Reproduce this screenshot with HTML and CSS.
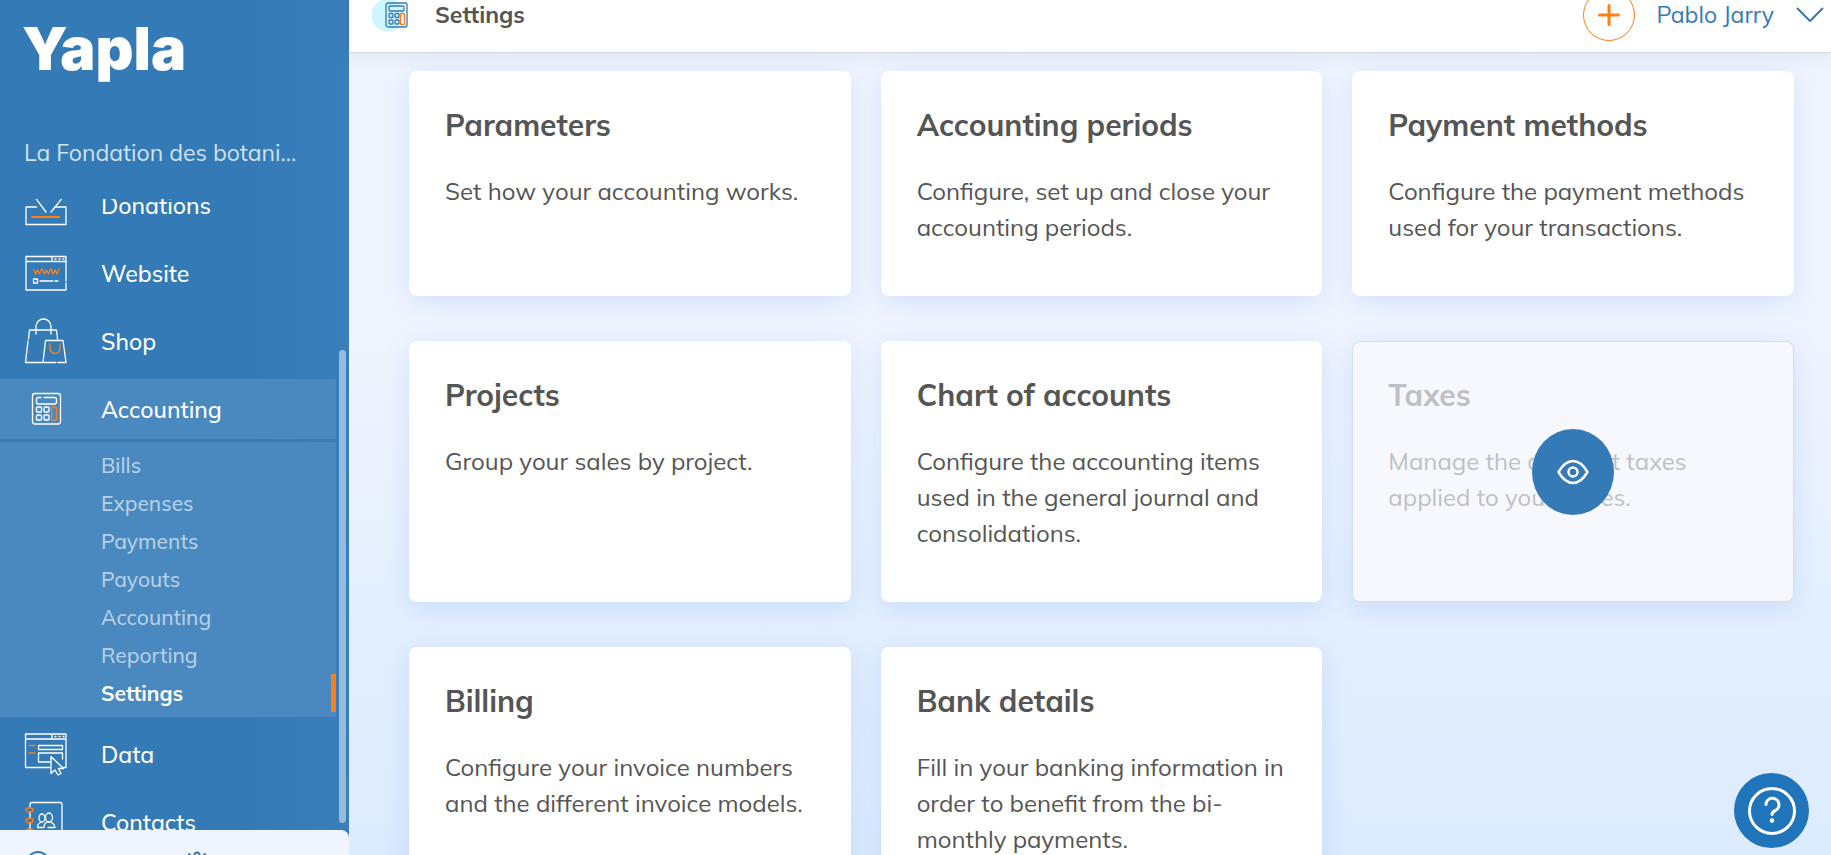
FILE: index.html
```html
<!DOCTYPE html>
<html lang="en">
<head>
<meta charset="utf-8">
<title>Settings - Yapla</title>
<link rel="stylesheet" href="styles.css">
</head>
<body>
<div class="app">
  <aside class="sidebar">
    <a class="logo" href="#">Yapla</a>
    <p class="org">La Fondation des botani...</p>
    <nav class="nav" aria-label="Main">
      <ul class="menu">
        <li><a class="item" href="#">
          <svg class="icon" viewBox="0 0 44 48"><path d="M12.500 26H2v17.500h40V26H31"/><path d="M10 15l12 16M40 15L27 31"/><path class="accent thick" d="M8 36h27"/></svg>
          <span>Donations</span></a></li>
        <li><a class="item" href="#">
          <svg class="icon" viewBox="0 0 44 48"><path d="M42 34v7H2V7.500h40V32M2 12.500h40M28 7.500V12"/><path class="dots" d="M31 10h9"/><path class="accent" d="M9.500 20l2 5 2-4 2 4 2-5M18.500 20l2 5 2-4 2 4 2-5M27 20l2 5 2-4 2 4 2-5"/><path d="M9.500 30h4v4h-4zM16 32h13M31 32h3"/></svg>
          <span>Website</span></a></li>
        <li><a class="item" href="#">
          <svg class="icon" viewBox="0 0 44 48"><path d="M4.500 22l1-9h27l1 9M12 17V9.500a7.500 7.500 0 0 1 15 0V17M4 24L1.500 45.500H32M34 45.500h8L39 23.500H21.500l-2.500 22"/><path class="accent" d="M26 27v4.500a5 5 0 0 0 10 0V27"/></svg>
          <span>Shop</span></a></li>
        <li><a class="item active" href="#">
          <svg class="icon" viewBox="0 0 44 48"><rect x="8.500" y="8.500" width="28" height="30.500" rx="2.500"/><path d="M17 12.500h-2.500q-2 0-2 2v2.500q0 2 2 2h16q2 0 2-2v-2.500q0-2-2-2H20"/><rect x="12.500" y="22" width="5" height="5" rx="1"/><rect x="20" y="22" width="5" height="5" rx="1"/><rect x="12.500" y="30" width="5" height="5" rx="1"/><rect x="20" y="30" width="5" height="5" rx="1"/><rect class="accent" x="27.500" y="22" width="5" height="13" rx="1"/></svg>
          <span>Accounting</span></a>
          <ul class="submenu">
            <li><a href="#">Bills</a></li>
            <li><a href="#">Expenses</a></li>
            <li><a href="#">Payments</a></li>
            <li><a href="#">Payouts</a></li>
            <li><a href="#">Accounting</a></li>
            <li><a href="#">Reporting</a></li>
            <li><a class="current" href="#" aria-current="page">Settings</a></li>
          </ul></li>
        <li><a class="item" href="#">
          <svg class="icon" viewBox="0 0 44 48"><path d="M26 37.500H1.500V4H42v33.500h-3M2 9h40M28 4v5"/><path class="dots" d="M31 6.500h9"/><path class="accent" d="M5 15.500h6M5 23h6"/><path d="M14.500 15.500h24v4h-24zM26 32H14.500v-9h24v6"/><path d="M27 26.500v17l4-3.500 3 5 3-1.500-2.500-5h5z"/></svg>
          <span>Data</span></a></li>
        <li><a class="item" href="#">
          <svg class="icon" viewBox="0 0 44 48"><path d="M6 9V6.500Q6 4.500 8 4.500h28q2 0 2 2V44H6V25M6 14.500v5"/><rect class="accent" x="2" y="10" width="7" height="4" rx="2"/><rect class="accent" x="2" y="20.500" width="7" height="4" rx="2"/><rect class="accent" x="2" y="31" width="7" height="4" rx="2"/><ellipse cx="18" cy="20" rx="3" ry="4"/><ellipse cx="25" cy="19.500" rx="3.500" ry="4.500"/><path d="M19 29.500h-5.500q0-4 3.500-5M20 29.500q0-4 3-5.500h4q3.500 2 4 5.500h-7"/></svg>
          <span>Contacts</span></a></li>
      </ul>
      <span class="thumb"></span>
    </nav>
    <div class="dock">
      <svg class="dock-icon" viewBox="0 0 24 24"><circle cx="12" cy="13" r="11"/></svg>
      <svg class="dock-icon" viewBox="0 0 24 24"><circle cx="12" cy="5" r="2.500"/><path d="M4 4l1 1M20 4l-1 1"/><circle cx="12" cy="15" r="7"/></svg>
    </div>
  </aside>
  <div class="page">
    <header class="topbar">
      <span class="badge"><svg viewBox="0 0 24 26"><rect x="1" y="1" width="21" height="24" rx="2"/><rect x="4" y="4" width="15" height="5" rx="1"/><rect x="4" y="11.500" width="4" height="4" rx="1"/><rect x="10" y="11.500" width="4" height="4" rx="1"/><rect x="4" y="18" width="4" height="4" rx="1"/><rect x="10" y="18" width="4" height="4" rx="1"/><rect class="accent" x="15.500" y="11.500" width="4" height="11" rx="1"/></svg></span>
      <h1>Settings</h1>
      <button class="add" type="button" aria-label="Add"><svg viewBox="0 0 22 22"><path d="M11 1.500v19M1.500 11h19"/></svg></button>
      <button class="user" type="button"><span>Pablo Jarry</span><svg viewBox="0 0 28 16"><path d="M1.500 1.500L14 14 26.500 1.500"/></svg></button>
    </header>
    <main class="cards">
      <a class="card" href="#"><h2>Parameters</h2><p>Set how your accounting works.</p></a>
      <a class="card" href="#"><h2>Accounting periods</h2><p>Configure, set up and close your accounting periods.</p></a>
      <a class="card" href="#"><h2>Payment methods</h2><p>Configure the payment methods used for your transactions.</p></a>
      <a class="card" href="#"><h2>Projects</h2><p>Group your sales by project.</p></a>
      <a class="card" href="#"><h2>Chart of accounts</h2><p>Configure the accounting items used in the general journal and consolidations.</p></a>
      <a class="card hovered" href="#"><h2>Taxes</h2><p>Manage the different taxes applied to your prices.</p>
        <span class="view"><svg viewBox="0 0 32 26"><path d="M1.500 13Q8 2 16 2t14.500 11Q24 24 16 24T1.500 13z"/><circle cx="16" cy="13" r="4.500"/></svg></span></a>
      <a class="card" href="#"><h2>Billing</h2><p>Configure your invoice numbers and the different invoice models.</p></a>
      <a class="card" href="#"><h2>Bank details</h2><p>Fill in your banking information in order to benefit from the bi-monthly payments.</p></a>
    </main>
  </div>
  <button class="help" type="button" aria-label="Help"><svg viewBox="0 0 48 48"><circle cx="24" cy="24" r="22.500"/><path d="M18 17.500a6.500 6.500 0 1 1 9.500 6Q24 25 24 27.500"/><circle class="dot" cx="24" cy="33.500" r="2.300"/></svg></button>
</div>
</body>
</html>
```
FILE: styles.css
```css
* { box-sizing: border-box; }
body { margin: 0; font-family: Mulish, Muli, "Open Sans", sans-serif; font-size: 24px; color: #555; }
h1, h2, p, ul { margin: 0; padding: 0; }
ul { list-style: none; }
a { color: inherit; text-decoration: none; }
button { padding: 0; border: 0; background: none; font: inherit; cursor: pointer; }
svg { display: block; fill: none; stroke: currentColor; stroke-linecap: round; stroke-linejoin: round; }

.app { display: flex; height: 100vh; overflow: hidden; }

.sidebar { flex: 0 0 349px; display: flex; flex-direction: column; background: linear-gradient(90deg, #347ab7 70%, #397fbb); color: #fff; font-size: 23px; }
.logo { padding: 15px 22px 0; font: 900 59px/68px Inter, sans-serif; }
.org { padding: 52px 24px 28px; line-height: 36px; color: #d0e1f0; }
.nav { position: relative; flex: 1; min-height: 0; overflow: hidden; }
.menu { display: flex; flex-direction: column; gap: 8px; margin: -24px 13px 0 0; }
.item { display: flex; align-items: center; gap: 33px; height: 60px; padding: 0 24px; font-weight: 500; }
.icon { width: 44px; height: 48px; stroke-width: 1.3px; }
.accent { stroke: #ff7f17; }
.thick { stroke-width: 2px; }
.dots { stroke-dasharray: 1 3; }
.active { background: #4a89bf; }
.submenu { margin: 3px 0 -1px; padding: 4px 0 5px; background: #4a89bf; font-size: 21px; font-weight: 500; line-height: 38px; }
.submenu a { display: block; padding-left: 101px; color: #b5cfe5; }
.submenu .current { border-right: 5px solid #ff7f17; color: #fff; font-weight: 700; }
.thumb { position: absolute; right: 3px; bottom: 7px; width: 7px; height: 473px; border-radius: 4px; background: #97bbdc; }
.dock { display: flex; gap: 135px; height: 25px; padding: 20px 26px 0; border-radius: 0 8px 0 0; background: #f0f4ff; color: #347ab7; overflow: hidden; }
.dock-icon { flex: none; width: 24px; height: 24px; stroke-width: 2px; }

.page { flex: 1; min-width: 0; background: linear-gradient(#f1f4fe, #f0f4fe 38%, #e4effd 70%, #dcebfe); }
.topbar { position: relative; display: flex; align-items: center; height: 75px; margin-top: -22px; padding: 0 7px 0 23px; border-bottom: 1px solid #ced7e8; background: #fff; box-shadow: 0 6px 12px rgba(80, 90, 120, .08); font-size: 23px; }
.badge { display: flex; justify-content: flex-end; align-items: center; width: 37px; height: 32px; background: radial-gradient(circle at 16px 16px, #cdf6ff 16px, transparent 17px); color: #347ab7; }
.badge svg { width: 24px; height: 26px; stroke-width: 1.3px; }
.topbar h1 { margin-left: 26px; font-size: 23px; font-weight: 700; line-height: 36px; }
.add { display: grid; place-items: center; width: 52px; height: 52px; margin-left: auto; border: 1px solid #ff7f17; border-radius: 50%; color: #ff7f17; }
.add svg { width: 22px; height: 22px; stroke-width: 3px; }
.user { display: flex; align-items: center; gap: 22px; margin-left: 21px; color: #347ab7; line-height: 36px; }
.user svg { width: 28px; height: 16px; stroke-width: 2px; }

.cards { display: grid; grid-template-columns: repeat(3, 1fr); gap: 45px 30px; padding: 18px 37px 45px 60px; }
.card { position: relative; padding: 36px 36px 51px; border-radius: 8px; background: #fff; box-shadow: 0 6px 24px rgba(110, 160, 245, .22); line-height: 36px; }
.card h2 { margin-bottom: 30px; font-size: 30px; font-weight: 700; line-height: 36px; }
.hovered { background: #f6f8fe; box-shadow: inset 0 0 0 1px #d5dded, 0 6px 24px rgba(110, 160, 245, .22); color: #bfc0c5; }
.view { position: absolute; top: 50%; left: 50%; display: grid; place-items: center; width: 82px; height: 86px; margin: -43px 0 0 -41px; border-radius: 50%; background: #347ab7; color: #fff; }
.view svg { width: 32px; height: 26px; stroke-width: 2.5px; }

.help { position: fixed; right: 22px; bottom: 7px; display: grid; place-items: center; width: 75px; height: 75px; border-radius: 50%; background: #2074b9; color: #fff; }
.help svg { width: 48px; height: 48px; stroke-width: 3px; }
.dot { fill: currentColor; stroke: none; }
```
